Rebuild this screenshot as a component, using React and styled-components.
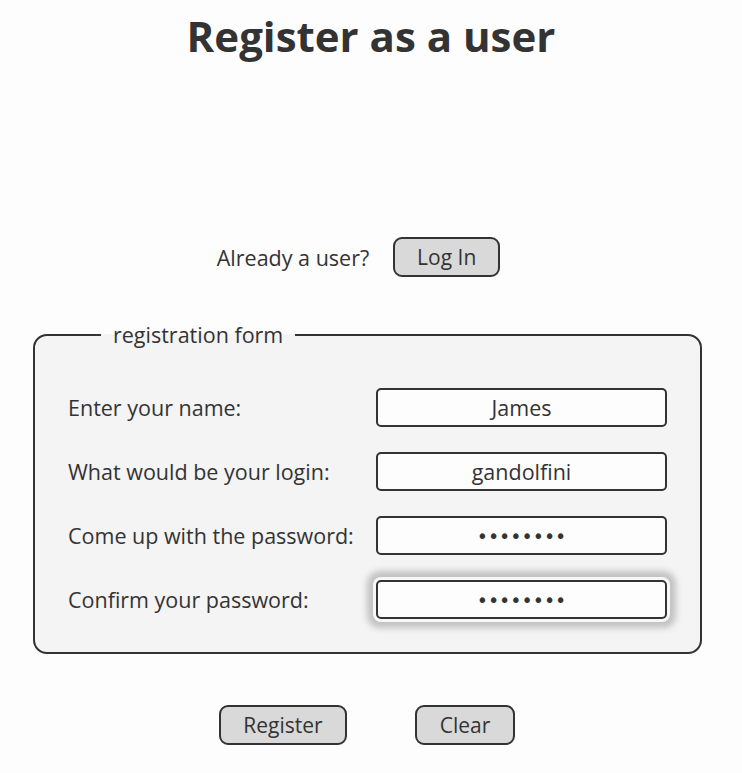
import styled, { createGlobalStyle } from 'styled-components';

const GlobalStyle = createGlobalStyle`
    html, body {
        margin: 0;
        padding: 0;
        background: #fdfdfd;
    }
    body {
        font-family: "Open Sans", "DejaVu Sans", sans-serif;
        color: #333;
    }
`;

function App() {
    return (
        <Page>
            <GlobalStyle />
            <Title>Register as a user</Title>

            <LoginRow>
                <span>Already a user?</span>
                <Button type="button">Log In</Button>
            </LoginRow>

            <Form onSubmit={(e) => e.preventDefault()}>
                <Fieldset>
                    <Legend>registration form</Legend>
                    <Label htmlFor="name">Enter your name:</Label>
                    <Input id="name" defaultValue="James" />
                    <Label htmlFor="login">What would be your login:</Label>
                    <Input id="login" defaultValue="gandolfini" />
                    <Label htmlFor="pass">Come up with the password:</Label>
                    <Input id="pass" type="password" defaultValue="12345678" />
                    <Label htmlFor="confirm">Confirm your password:</Label>
                    <Input id="confirm" type="password" defaultValue="12345678" autoFocus $focused />
                </Fieldset>

                <Actions>
                    <Button type="submit" $width="128px">Register</Button>
                    <Button type="reset" $width="100px">Clear</Button>
                </Actions>
            </Form>
        </Page>
    );
}

export default App;

const Page = styled.div`
    width: 742px;
    padding-top: 11px;
`;

const Title = styled.h1`
    margin: 0;
    text-align: center;
    font-size: 42px;
    line-height: 50px;
    font-weight: 700;
    color: #333;
`;

const LoginRow = styled.div`
    display: flex;
    justify-content: center;
    align-items: center;
    gap: 24px;
    margin-top: 176px;
    padding-right: 25px;
    font-size: 21.5px;
`;

const Button = styled.button`
    width: ${(p) => p.$width || '107px'};
    height: 40px;
    padding: 0;
    border: 2px solid #333;
    border-radius: 9px;
    background: #d9d9d9;
    color: #333;
    font-family: inherit;
    font-size: 21px;
    cursor: pointer;
`;

const Form = styled.form`
    margin-top: 45px;
`;

const Fieldset = styled.fieldset`
    margin: 0 40px 0 33px;
    padding: 40px 33px 33px 33px;
    border: 2px solid #333;
    border-radius: 14px;
    background: #f4f4f4;
    display: grid;
    grid-template-columns: 1fr 291px;
    row-gap: 25px;
    align-items: center;
`;

const Legend = styled.legend`
    margin-left: 33px;
    padding: 0 12px;
    font-size: 21.5px;
    line-height: 26px;
`;

const Label = styled.label`
    font-size: 21.5px;
`;

const Input = styled.input`
    box-sizing: border-box;
    width: 291px;
    height: 39px;
    border: 2px solid #333;
    border-radius: 5px;
    background: #fdfdfd;
    color: #333;
    caret-color: #333;
    font-family: ${(p) => (p.type === 'password' ? '"DejaVu Sans", sans-serif' : 'inherit')};
    font-size: ${(p) => (p.type === 'password' ? '19px' : '21.5px')};
    text-align: center;
    outline: none;
    box-shadow: ${(p) => (p.$focused ? '0 0 0 3px #f7f7f7, 0 0 6px 9px #c2c2c2' : 'none')};
`;

const Actions = styled.div`
    display: flex;
    justify-content: center;
    gap: 68px;
    margin-top: 51px;
    padding-right: 8px;
`;
